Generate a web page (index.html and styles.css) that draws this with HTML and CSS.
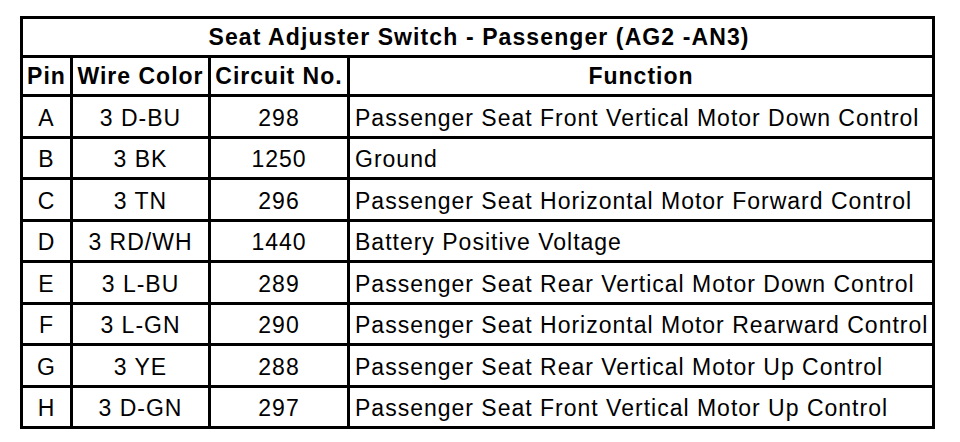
FILE: index.html
```html
<!DOCTYPE html>
<html>
<head>
<meta charset="utf-8">
<link rel="stylesheet" href="styles.css">
</head>
<body>
<table class="pins">
  <colgroup>
    <col class="c-pin"><col class="c-wire"><col class="c-circ"><col class="c-func">
  </colgroup>
  <tr class="r-title"><th colspan="4" class="title">Seat Adjuster Switch - Passenger (AG2 -AN3)</th></tr>
  <tr class="r-head"><th>Pin</th><th>Wire Color</th><th>Circuit No.</th><th>Function</th></tr>
  <tr class="r-a"><td>A</td><td>3 D-BU</td><td>298</td><td class="fn">Passenger Seat Front Vertical Motor Down Control</td></tr>
  <tr class="r-b"><td>B</td><td>3 BK</td><td>1250</td><td class="fn">Ground</td></tr>
  <tr class="r-a"><td>C</td><td>3 TN</td><td>296</td><td class="fn">Passenger Seat Horizontal Motor Forward Control</td></tr>
  <tr class="r-b"><td>D</td><td>3 RD/WH</td><td>1440</td><td class="fn">Battery Positive Voltage</td></tr>
  <tr class="r-a"><td>E</td><td>3 L-BU</td><td>289</td><td class="fn">Passenger Seat Rear Vertical Motor Down Control</td></tr>
  <tr class="r-b"><td>F</td><td>3 L-GN</td><td>290</td><td class="fn">Passenger Seat Horizontal Motor Rearward Control</td></tr>
  <tr class="r-a"><td>G</td><td>3 YE</td><td>288</td><td class="fn">Passenger Seat Rear Vertical Motor Up Control</td></tr>
  <tr class="r-b"><td>H</td><td>3 D-GN</td><td>297</td><td class="fn">Passenger Seat Front Vertical Motor Up Control</td></tr>
</table>
</body>
</html>
```
FILE: styles.css
```css
html, body {
  margin: 0;
  padding: 0;
  background: #fff;
}
body {
  padding: 16px 0 0 20px;
  font-family: "Liberation Sans", Arial, sans-serif;
  color: #000;
}
.pins {
  border-collapse: collapse;
  table-layout: fixed;
  width: 915px;
  border: 3px solid #000;
}
.c-pin { width: 50px; }
.c-wire { width: 138px; }
.c-circ { width: 139px; }
.c-func { width: 585px; }
.pins th, .pins td {
  border: 3px solid #000;
  padding: 0;
  text-align: center;
  vertical-align: middle;
  font-size: 23px;
  letter-spacing: 1px;
  white-space: nowrap;
  line-height: 1;
}
.pins td {
  padding-top: 3px;
}
.pins th {
  font-weight: bold;
  letter-spacing: 1px;
}
.pins th.title {
  letter-spacing: 1.1px;
  padding-left: 3px;
}
.pins td.fn {
  text-align: left;
  padding-left: 5px;
}
.r-title { height: 39px; }
.r-head { height: 39px; }
.r-a { height: 42px; }
.r-b { height: 41px; }
```
